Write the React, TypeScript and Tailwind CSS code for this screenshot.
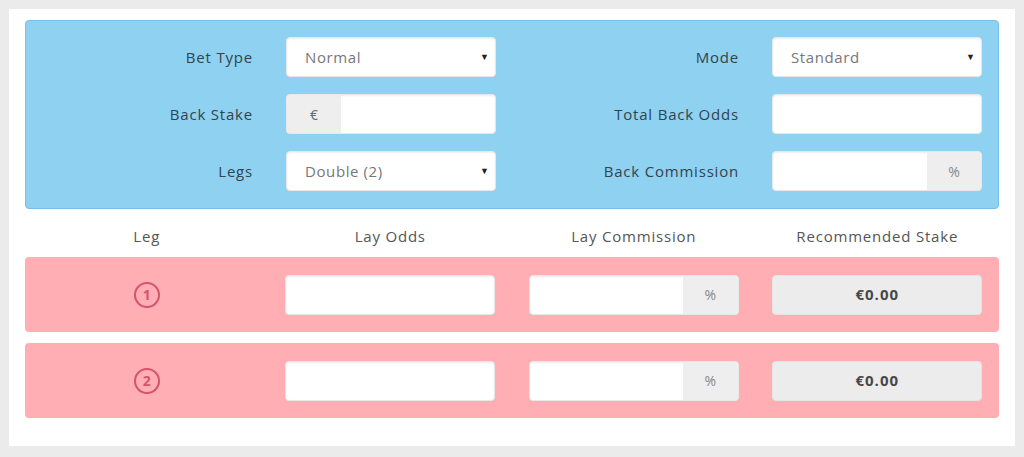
import React from 'react';

const font = { fontFamily: '"Open Sans", "Liberation Sans", sans-serif' };

function Field({ children, className = '' }: { children?: React.ReactNode; className?: string }) {
    return (
        <div className={`h-[40px] w-[210px] flex rounded-[4px] bg-white border border-[#e8e8e8] shadow-[inset_0_1px_2px_rgba(0,0,0,0.08)] overflow-hidden ${className}`}>
            {children}
        </div>
    );
}

function Select({ value }: { value: string }) {
    return (
        <Field className="items-center justify-between pl-[18px] pr-[6px]">
            <span className="text-[15px] tracking-[0.6px] text-[#777]">{value}</span>
            <span className="text-[9px] text-[#222]">▼</span>
        </Field>
    );
}

function FormRow({ label, children }: { label: string; children: React.ReactNode }) {
    return (
        <div className="flex items-center h-[40px]">
            <div className="w-[227px] text-right text-[15px] tracking-[0.8px] text-[#33434d]">{label}</div>
            <div className="ml-[33px]">{children}</div>
        </div>
    );
}

function LegRow({ n }: { n: number }) {
    return (
        <div className="grid grid-cols-4 bg-[#ffaeb3] rounded-[4px] h-[75px] items-center">
            <div className="flex justify-center">
                <div className="w-[26px] h-[26px] rounded-full border-2 border-[#d4536d] flex items-center justify-center text-[14px] font-bold text-[#d4536d]">
                    {n}
                </div>
            </div>
            <div className="flex justify-center">
                <Field />
            </div>
            <div className="flex justify-center">
                <Field>
                    <div className="flex-1" />
                    <div className="w-[55px] bg-[#eeeeee] flex items-center justify-center text-[14px] text-[#888]">%</div>
                </Field>
            </div>
            <div className="flex justify-center">
                <div className="h-[40px] w-[210px] rounded-[4px] bg-[#ececec] border border-[#e4e4e4] flex items-center justify-center text-[15px] tracking-[1px] font-bold text-[#484848]">
                    €0.00
                </div>
            </div>
        </div>
    );
}

export default function App() {
    return (
        <div className="min-h-screen bg-[#ebebeb] p-[9px]" style={font}>
            <div className="bg-white w-[1006px] h-[437px] px-[16px] pt-[11px]">
                <div className="bg-[#8fd1f1] border border-[#74c0ea] rounded-[4px] h-[189px] pt-[16px] grid grid-cols-2">
                    <div className="flex flex-col gap-[17px]">
                        <FormRow label="Bet Type"><Select value="Normal" /></FormRow>
                        <FormRow label="Back Stake">
                            <Field>
                                <div className="w-[54px] bg-[#eeeeee] flex items-center justify-center text-[14px] text-[#666]">€</div>
                                <div className="flex-1" />
                            </Field>
                        </FormRow>
                        <FormRow label="Legs"><Select value="Double (2)" /></FormRow>
                    </div>
                    <div className="flex flex-col gap-[17px]">
                        <FormRow label="Mode"><Select value="Standard" /></FormRow>
                        <FormRow label="Total Back Odds"><Field /></FormRow>
                        <FormRow label="Back Commission">
                            <Field>
                                <div className="flex-1" />
                                <div className="w-[54px] bg-[#eeeeee] flex items-center justify-center text-[14px] text-[#888]">%</div>
                            </Field>
                        </FormRow>
                    </div>
                </div>

                <div className="grid grid-cols-4 h-[48px] pt-[6px] items-center text-center text-[15px] tracking-[0.8px] text-[#555]">
                    <div>Leg</div>
                    <div>Lay Odds</div>
                    <div>Lay Commission</div>
                    <div>Recommended Stake</div>
                </div>

                <div className="flex flex-col gap-[11px]">
                    <LegRow n={1} />
                    <LegRow n={2} />
                </div>
            </div>
        </div>
    );
}
